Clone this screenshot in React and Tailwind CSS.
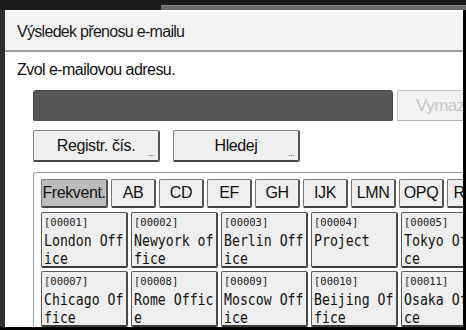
const ui = { fontFamily: '"Liberation Sans", Arial, sans-serif' };
const mono = { fontFamily: '"DejaVu Sans Mono", "Liberation Mono", monospace' };

const tabs = [
  { label: 'Frekvent.', w: 'w-[67px]', active: true },
  { label: 'AB', w: 'w-[45px]' },
  { label: 'CD', w: 'w-[45px]' },
  { label: 'EF', w: 'w-[45px]' },
  { label: 'GH', w: 'w-[45px]' },
  { label: 'IJK', w: 'w-[45px]' },
  { label: 'LMN', w: 'w-[45px]' },
  { label: 'OPQ', w: 'w-[45px]' },
  { label: 'RST', w: 'w-[45px]' },
];

const destinations = [
  ['00001', 'London Office'],
  ['00002', 'Newyork office'],
  ['00003', 'Berlin Office'],
  ['00004', 'Project'],
  ['00005', 'Tokyo Office'],
  ['00007', 'Chicago Office'],
  ['00008', 'Rome Office'],
  ['00009', 'Moscow Office'],
  ['00010', 'Beijing Office'],
  ['00011', 'Osaka Office'],
];

// the panel breaks names every 10 characters
function chunk(s) {
  const out = [];
  for (let i = 0; i < s.length; i += 10) out.push(s.slice(i, i + 10));
  return out;
}

function Dots() {
  return (
    <span className="absolute right-[4px] bottom-[2px] text-[9px] leading-none text-[#555] tracking-[-0.5px]">...</span>
  );
}

function Card({ no, name }) {
  return (
    <div className="w-[87px] h-[56px] shrink-0 overflow-hidden rounded-[2px] border border-[#5a5a5a] border-b-2 border-r-2 border-b-[#3a3a3a] border-r-[#4a4a4a] bg-[#eeeeee] pl-[2px] pt-[3px]">
      <div className="text-[10.5px] leading-[12px] text-[#222]" style={mono}>[{no}]</div>
      {chunk(name).map((line, i) => (
        <div key={i} className="h-[18px] pt-[1px] whitespace-nowrap">
          <span className="inline-block origin-left scale-x-[0.88] text-[15px] leading-[17px] text-[#111]" style={mono}>{line}</span>
        </div>
      ))}
    </div>
  );
}

export default function App() {
  return (
    <div className="w-[466px] h-[330px] overflow-hidden bg-[#1a1a1a] flex flex-col" style={ui}>
      <div className="h-[10px] flex shrink-0">
        <div className="w-[161px]" />
        <div className="flex-1 mt-[5px] bg-[#6b6b6b] border-t border-[#8a8a8a]" />
      </div>
      <div className="flex-1 flex min-h-0">
        <div className="w-[5px] bg-[#2e2e2e]" />
        <div className="flex-1 bg-white flex flex-col overflow-hidden">
          <div className="h-[42px] shrink-0 bg-[#f3f3f3] border-t-2 border-white border-b-2 border-b-[#9c9c9c] flex items-center pl-[12px]">
            <span className="text-[16px] text-[#1a1a1a] tracking-[-0.7px] pt-[2px]">Výsledek přenosu e-mailu</span>
          </div>
          <div className="mt-[8px] pl-[12px] text-[16px] leading-[20px] text-[#111] tracking-[-0.55px]">Zvol e-mailovou adresu.</div>
          <div className="mt-[10px] pl-[28px] flex gap-[4px] items-start overflow-hidden">
            <div className="w-[360px] h-[32px] shrink-0 rounded-[3px] bg-[#555555] border border-[#444]" />
            <div className="w-[90px] h-[32px] shrink-0 rounded-[2px] border border-[#c4c4c4] border-b-2 border-b-[#b0b0b0] bg-[#f2f2f2] flex items-center pl-[18px]">
              <span className="text-[17px] text-[#c8c8c8] tracking-[-0.5px] whitespace-nowrap">Vymazat</span>
            </div>
          </div>
          <div className="mt-[9px] pl-[28px] flex gap-[13px]">
            {['Registr. čís.', 'Hledej'].map((t) => (
              <div key={t} className="relative w-[127px] h-[32px] rounded-[2px] border border-[#8a8a8a] border-b-2 border-r-2 border-b-[#444] border-r-[#555] bg-[#efefef] flex items-center justify-center">
                <span className="text-[16px] text-[#111] tracking-[-0.4px]">{t}</span>
                <Dots />
              </div>
            ))}
          </div>
          <div className="mt-[10px] ml-[28px] flex-1 border-t border-l border-[#9a9a9a] rounded-tl-[3px] pl-[7px] pt-[6px] flex flex-col gap-[4px]">
            <div className="flex gap-[3px]">
              {tabs.map((t) => (
                <div key={t.label} className={`${t.w} h-[29px] shrink-0 rounded-[2px] border border-[#777] border-b-2 border-r-2 border-b-[#444] border-r-[#555] flex items-center justify-center ${t.active ? 'bg-[#bdbdbd]' : 'bg-[#eeeeee]'}`}>
                  <span className="text-[16px] text-[#111] tracking-[-0.4px]">{t.label}</span>
                </div>
              ))}
            </div>
            <div className="grid grid-cols-[repeat(5,87px)] gap-x-[3px] gap-y-[3px]">
              {destinations.map(([no, name]) => (
                <Card key={no} no={no} name={name} />
              ))}
            </div>
          </div>
        </div>
        <div className="w-[3px] bg-black" />
      </div>
      <div className="h-[3px] bg-black shrink-0" />
    </div>
  );
}
